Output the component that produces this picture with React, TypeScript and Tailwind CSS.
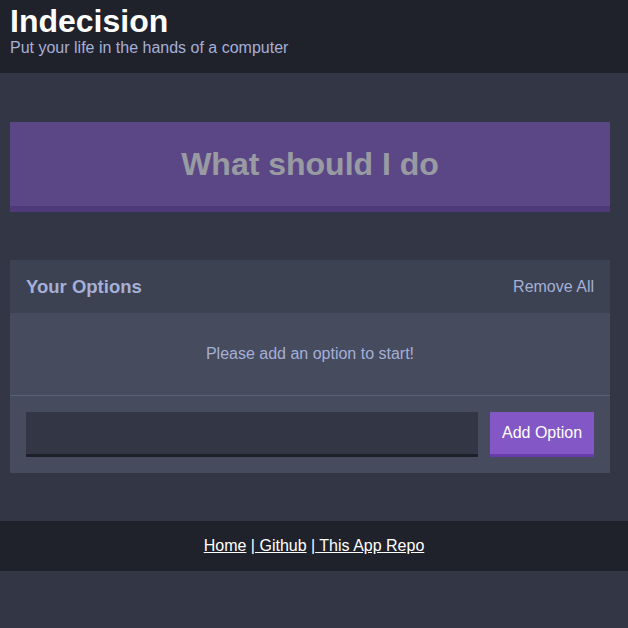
import { useState } from 'react'

export default function App() {
  const [options, setOptions] = useState<string[]>([])
  const [text, setText] = useState('')

  const handleAdd = (e: React.FormEvent) => {
    e.preventDefault()
    const value = text.trim()
    if (!value) return
    setOptions([...options, value])
    setText('')
  }

  const handlePick = () => {
    const pick = options[Math.floor(Math.random() * options.length)]
    alert(pick)
  }

  return (
    <div className="min-h-[628px] bg-[#333745] font-['Liberation_Sans',Arial,sans-serif]">
      {/* Header */}
      <header className="bg-[#20222b] pt-[4px] pb-[16px]">
        <div className="pl-[10px] pr-[18px]">
          <h1 className="text-[32px] leading-[35px] font-bold text-white">Indecision</h1>
          <h2 className="text-[16px] leading-[18px] text-[#a5afd7]">Put your life in the hands of a computer</h2>
        </div>
      </header>

      <main className="pl-[10px] pr-[18px] pt-[49px]">
        <button
          onClick={handlePick}
          disabled={options.length === 0}
          className="w-[600px] bg-[#8357c5] border-b-[6px] border-[#693cad] p-[24px] text-[32px] leading-[36px] font-bold text-white disabled:opacity-50"
        >
          What should I do
        </button>

        {/* Options widget */}
        <div className="w-[600px] mt-[48px] bg-[#464b5e]">
          <div className="flex items-center justify-between bg-[#3c4251] px-[16px] h-[53px]">
            <h3 className="text-[18.5px] font-bold text-[#a5afd7]">Your Options</h3>
            <button onClick={() => setOptions([])} className="text-[16px] text-[#a5afd7]">
              Remove All
            </button>
          </div>

          {options.length === 0 ? (
            <p className="pt-[32px] pb-[32px] text-center text-[16px] leading-[18px] text-[#a5afd7] border-b border-[#5b6079]">
              Please add an option to start!
            </p>
          ) : (
            <div className="border-b border-[#5b6079]">
              {options.map((o, i) => (
                <p key={o} className="px-[16px] py-[16px] text-[16px] text-white">
                  {i + 1}. {o}
                </p>
              ))}
            </div>
          )}

          <form onSubmit={handleAdd} className="flex p-[16px]">
            <input
              value={text}
              onChange={(e) => setText(e.target.value)}
              className="flex-1 mr-[12px] h-[45px] bg-[#333745] border-b-[3px] border-[#1e2029] px-[12px] text-[16px] text-[#a5afd7] outline-none"
            />
            <button className="w-[104px] h-[45px] bg-[#8357c5] border-b-[3px] border-[#693cad] text-[16px] font-medium text-white">
              Add Option
            </button>
          </form>
        </div>
      </main>

      <footer className="mt-[48px] h-[50px] flex items-center justify-center bg-[#20222b] text-[16px] text-white">
        <p>
          <a href="#" className="underline">Home</a> |<a href="#" className="underline"> Github</a> |<a href="#" className="underline"> This App Repo</a>
        </p>
      </footer>
    </div>
  )
}
